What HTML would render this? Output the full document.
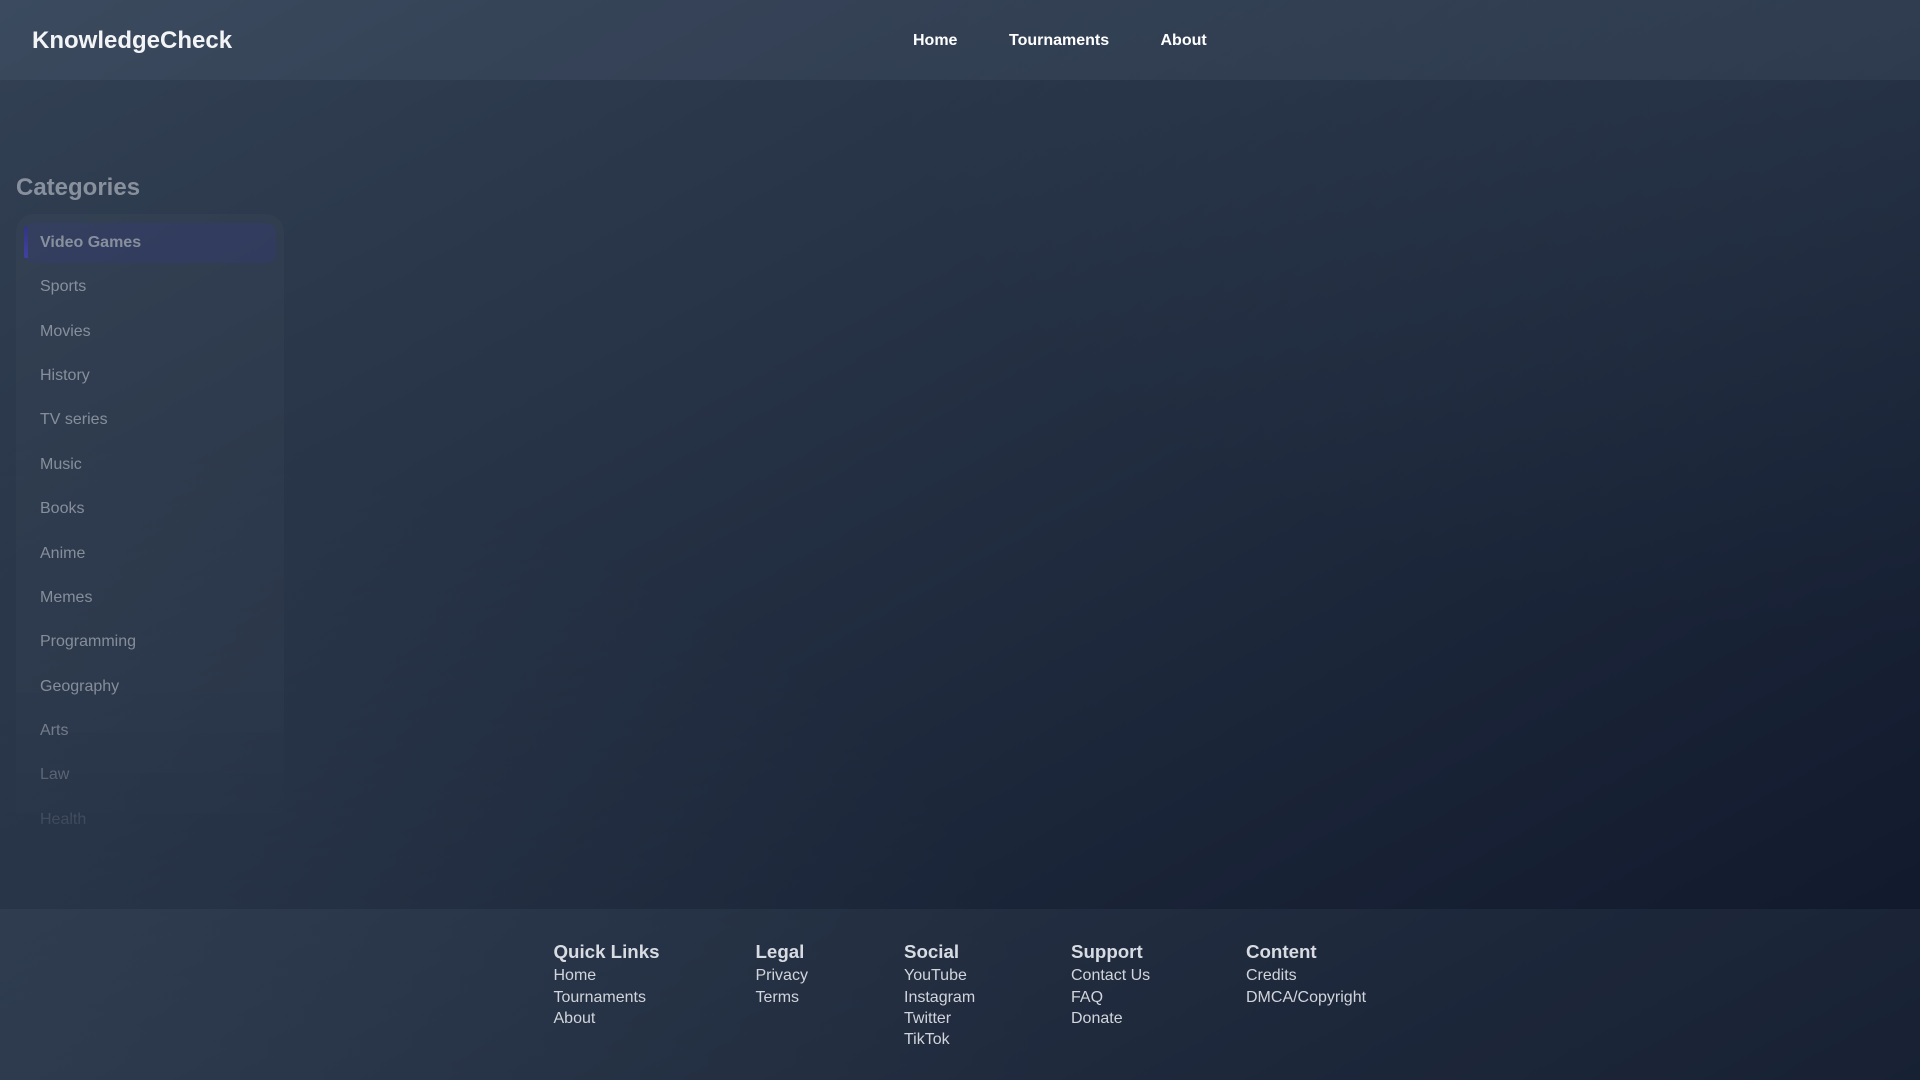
<!DOCTYPE html>
<html><head><meta charset="utf-8"><title>KnowledgeCheck</title>
<style>
*{box-sizing:border-box;margin:0;padding:0}
html,body{width:1920px;height:1080px;overflow:hidden}
body{position:relative;font-family:"Liberation Sans",sans-serif;background:radial-gradient(ellipse 55% 60% at 100% 0,rgba(100,120,145,.09),rgba(100,120,145,0) 100%),radial-gradient(ellipse 55% 60% at 0 100%,rgba(100,120,145,.09),rgba(100,120,145,0) 100%),linear-gradient(to bottom right,#334155 0%,#0f172a 100%);color:#fff}
a{color:inherit;text-decoration:none}
header{position:absolute;left:0;top:0;width:1920px;height:80px;background:rgba(148,170,190,.09)}
.logo{position:absolute;left:32px;top:27px;font-size:24px;font-weight:700;line-height:28px;color:#f3f4f6}
nav a{position:absolute;top:32px;font-size:16px;font-weight:700;line-height:18px;color:#fff;white-space:nowrap}
.side{position:absolute;left:0;top:0;width:300px;height:909px;opacity:.55}
.side h2{position:absolute;left:16px;top:174px;font-size:24px;line-height:28px;font-weight:700;color:#d1d5db}
.panel{position:absolute;left:16px;top:214px;width:268px;height:650px;border-radius:18px;background:rgba(255,255,255,.035);-webkit-mask-image:linear-gradient(to bottom,#000 0,#000 72%,transparent 100%);mask-image:linear-gradient(to bottom,#000 0,#000 72%,transparent 100%)}
.item{position:absolute;left:24px;width:252px;height:40px;font-size:16px;line-height:40px;padding-left:16px;color:#d1d5db;white-space:nowrap}
.list{position:absolute;left:0;top:0;width:300px;height:909px;-webkit-mask-image:linear-gradient(to bottom,#000 0,#000 700px,transparent 860px);mask-image:linear-gradient(to bottom,#000 0,#000 700px,transparent 860px)}
.item.on{background:rgba(67,56,202,.2);border-radius:10px;font-weight:700}
.bar{position:absolute;left:24px;top:226px;width:4px;height:32px;background:linear-gradient(to bottom,#3730a3,#4f46e5);border-radius:2px 0 0 2px}
footer{position:absolute;left:0;top:909px;width:1920px;height:171px;background:rgba(148,170,190,.07);color:#d1d5db}
.col{position:absolute;top:33px}
.col h3{position:relative;top:-1px;font-size:18.72px;font-weight:700;line-height:21px;white-space:nowrap;margin-bottom:2.3px;color:#d8dce2}
.col a{display:block;font-size:16px;line-height:21.3px;white-space:nowrap}
</style></head><body>
<div class="side">
<h2>Categories</h2>
<div class="panel"></div>
<div class="list">
<div class="item on" style="top:223px">Video Games</div>
<div class="bar"></div>
<div class="item" style="top:266.5px">Sports</div>
<div class="item" style="top:311.5px">Movies</div>
<div class="item" style="top:355.5px">History</div>
<div class="item" style="top:400px">TV series</div>
<div class="item" style="top:445px">Music</div>
<div class="item" style="top:489px">Books</div>
<div class="item" style="top:534px">Anime</div>
<div class="item" style="top:578px">Memes</div>
<div class="item" style="top:622px">Programming</div>
<div class="item" style="top:667px">Geography</div>
<div class="item" style="top:711px">Arts</div>
<div class="item" style="top:755px">Law</div>
<div class="item" style="top:800px">Health</div>
</div>
</div>
<header>
<div class="logo">KnowledgeCheck</div>
<nav>
<a href="#" style="left:913px">Home</a>
<a href="#" style="left:1009px">Tournaments</a>
<a href="#" style="left:1160.5px">About</a>
</nav>
</header>
<footer>
<div class="col" style="left:553.5px"><h3>Quick Links</h3><a href="#">Home</a><a href="#">Tournaments</a><a href="#">About</a></div>
<div class="col" style="left:755.5px"><h3>Legal</h3><a href="#">Privacy</a><a href="#">Terms</a></div>
<div class="col" style="left:904px"><h3>Social</h3><a href="#">YouTube</a><a href="#">Instagram</a><a href="#">Twitter</a><a href="#">TikTok</a></div>
<div class="col" style="left:1071px"><h3>Support</h3><a href="#">Contact Us</a><a href="#">FAQ</a><a href="#">Donate</a></div>
<div class="col" style="left:1246px"><h3>Content</h3><a href="#">Credits</a><a href="#">DMCA/Copyright</a></div>
</footer>
</body></html>
